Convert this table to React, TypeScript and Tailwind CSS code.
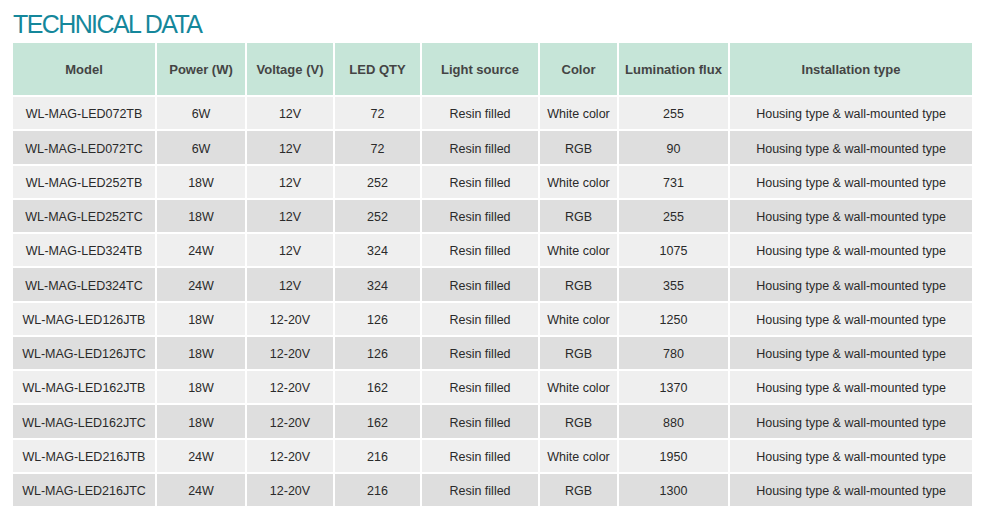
const headers = [
  "Model",
  "Power (W)",
  "Voltage (V)",
  "LED QTY",
  "Light source",
  "Color",
  "Lumination flux",
  "Installation type",
]

const rows = [
  ["WL-MAG-LED072TB", "6W", "12V", "72", "White color", "255"],
  ["WL-MAG-LED072TC", "6W", "12V", "72", "RGB", "90"],
  ["WL-MAG-LED252TB", "18W", "12V", "252", "White color", "731"],
  ["WL-MAG-LED252TC", "18W", "12V", "252", "RGB", "255"],
  ["WL-MAG-LED324TB", "24W", "12V", "324", "White color", "1075"],
  ["WL-MAG-LED324TC", "24W", "12V", "324", "RGB", "355"],
  ["WL-MAG-LED126JTB", "18W", "12-20V", "126", "White color", "1250"],
  ["WL-MAG-LED126JTC", "18W", "12-20V", "126", "RGB", "780"],
  ["WL-MAG-LED162JTB", "18W", "12-20V", "162", "White color", "1370"],
  ["WL-MAG-LED162JTC", "18W", "12-20V", "162", "RGB", "880"],
  ["WL-MAG-LED216JTB", "24W", "12-20V", "216", "White color", "1950"],
  ["WL-MAG-LED216JTC", "24W", "12-20V", "216", "RGB", "1300"],
]

export default function App() {
  return (
    <div className="w-[1000px] h-[520px] bg-white font-['Liberation_Sans',Arial,sans-serif] overflow-hidden">
      <h1 className="pl-[13px] pt-[10px] h-[43px] text-[25px] leading-[28px] tracking-[-1.6px] text-[#15879b]">
        TECHNICAL DATA
      </h1>
      <div className="ml-[13px] grid grid-cols-[142px_88px_86px_85px_116px_77px_109px_242px] grid-rows-[52px] auto-rows-[32.25px] gap-x-[2px] gap-y-[2px] w-[959px]">
        {headers.map((h) => (
          <div
            key={h}
            className="bg-[#c6e5d8] flex items-center justify-center pt-[2px] text-[13px] font-bold text-[#444444] whitespace-nowrap"
          >
            {h}
          </div>
        ))}
        {rows.map((r, i) => {
          const bg = i % 2 === 0 ? "bg-[#efefef]" : "bg-[#dedede]"
          const cells = [r[0], r[1], r[2], r[3], "Resin filled", r[4], r[5], "Housing type & wall-mounted type"]
          return cells.map((c, j) => (
            <div
              key={i + "-" + j}
              className={bg + " flex items-center justify-center pt-[3px] text-[12.5px] text-[#2a2a2a] whitespace-nowrap"}
            >
              {c}
            </div>
          ))
        })}
      </div>
    </div>
  )
}
